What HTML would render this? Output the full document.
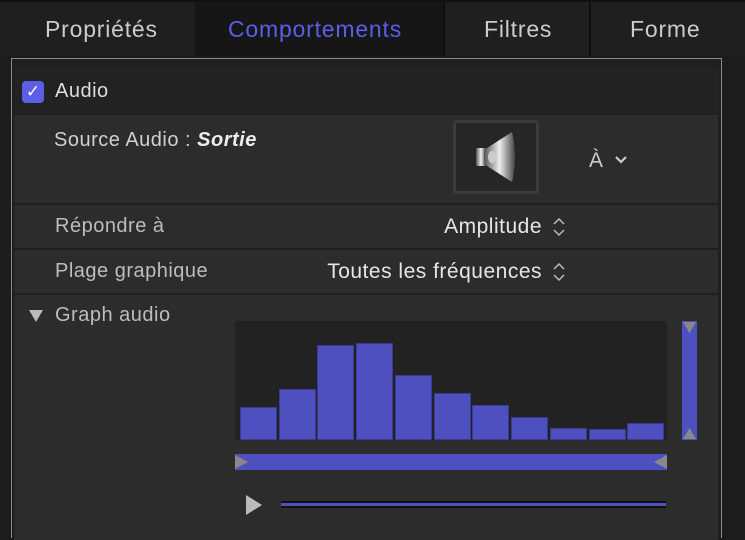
<!DOCTYPE html><html><head><style>
body{margin:0;width:745px;height:535px;background:#1c1c1c;font-family:"Liberation Sans",sans-serif;position:relative;overflow:hidden;color:#ddd}
div,span{position:absolute;white-space:nowrap}
.t{font-size:23px;letter-spacing:.8px;top:16px}
.lbl{font-size:20px;letter-spacing:.5px;color:#bdbdbd}
.v{font-size:21px;letter-spacing:.5px;color:#e6e6e6;right:203px}
.bar{background:#4f50c0;border:1px solid #3a3b90;box-sizing:border-box}
</style></head><body>
<div style="left:0;top:0;width:745px;height:56px;background:#1f1f1f;border-top:2px solid #111;box-sizing:border-box"></div>
<div style="left:195px;top:2px;width:248px;height:54px;background:#161616"></div>
<div style="left:443px;top:2px;width:2px;height:54px;background:#0e0e0e"></div>
<div style="left:589px;top:2px;width:2px;height:54px;background:#0e0e0e"></div>
<span class="t" style="left:45px;color:#ccc">Propriétés</span>
<span class="t" style="left:228px;color:#5d5ee8">Comportements</span>
<span class="t" style="left:484px;color:#ccc">Filtres</span>
<span class="t" style="left:630px;color:#ccc">Forme</span>
<div style="left:11px;top:58px;width:711px;height:480px;border:1px solid #8a8a8a;border-bottom:none;background:#1f1f1f;box-sizing:border-box"></div>
<div style="left:13px;top:66px;width:706px;height:48px;background:#222"></div>
<div style="left:22px;top:81px;width:22px;height:22px;border-radius:4px;background:#5d5ee8;color:#fff;font-size:17px;text-align:center;line-height:22px">✓</div>
<span style="left:55px;top:80px;font-size:20px;letter-spacing:.5px;color:#ddd">Audio</span>
<div style="left:14px;top:115px;width:704px;height:88px;background:#2c2c2c"></div>
<div style="left:14px;top:205px;width:704px;height:43px;background:#2c2c2c"></div>
<div style="left:14px;top:250px;width:704px;height:43px;background:#2c2c2c"></div>
<div style="left:14px;top:295px;width:704px;height:245px;background:#2c2c2c"></div>
<span class="lbl" style="left:54px;top:129px;color:#d0d0d0">Source Audio : <b><i style="color:#eee">Sortie</i></b></span>
<div style="left:453px;top:120px;width:86px;height:74px;border:3px solid #3c3c3c;border-radius:4px;background:#262626;box-sizing:border-box"></div>
<svg style="position:absolute;left:472px;top:130px" width="50" height="56"><defs><linearGradient id="g" x1="0" x2="1"><stop offset="0" stop-color="#555"/><stop offset=".5" stop-color="#eee"/><stop offset="1" stop-color="#444"/></linearGradient></defs><rect x="4" y="18" width="10" height="18" rx="2" fill="url(#g)"/><path d="M12 20 L40 2 Q46 27 40 52 L12 34Z" fill="url(#g)"/><ellipse cx="20" cy="27" rx="4" ry="6" fill="#ccc"/></svg>
<span style="left:589px;top:149px;font-size:21px;color:#ccc">À</span>
<svg style="position:absolute;left:614px;top:155px" width="14" height="10"><path d="M2 2 L7 7 L12 2" stroke="#ccc" stroke-width="2.2" fill="none"/></svg>
<span class="lbl" style="left:55px;top:215px">Répondre à</span>
<span class="v" style="top:215px">Amplitude</span>
<span class="lbl" style="left:55px;top:260px">Plage graphique</span>
<span class="v" style="top:260px">Toutes les fréquences</span>
<svg style="position:absolute;left:552px;top:216px" width="14" height="22"><path d="M2 8 L7 3 L12 8 M2 14 L7 19 L12 14" stroke="#bbb" stroke-width="1.5" fill="none"/></svg>
<svg style="position:absolute;left:552px;top:261px" width="14" height="22"><path d="M2 8 L7 3 L12 8 M2 14 L7 19 L12 14" stroke="#bbb" stroke-width="1.5" fill="none"/></svg>
<svg style="position:absolute;left:28px;top:309px" width="16" height="14"><path d="M1 1 H15 L8 13Z" fill="#bbb"/></svg>
<span class="lbl" style="left:55px;top:304px">Graph audio</span>
<div style="left:235px;top:321px;width:432px;height:119px;background:#222;border-radius:3px"></div>
<div class="bar" style="left:240px;top:407px;width:37px;height:33px"></div>
<div class="bar" style="left:279px;top:389px;width:37px;height:51px"></div>
<div class="bar" style="left:317px;top:345px;width:37px;height:95px"></div>
<div class="bar" style="left:356px;top:343px;width:37px;height:97px"></div>
<div class="bar" style="left:395px;top:375px;width:37px;height:65px"></div>
<div class="bar" style="left:434px;top:393px;width:37px;height:47px"></div>
<div class="bar" style="left:472px;top:405px;width:37px;height:35px"></div>
<div class="bar" style="left:511px;top:417px;width:37px;height:23px"></div>
<div class="bar" style="left:550px;top:428px;width:37px;height:12px"></div>
<div class="bar" style="left:589px;top:429px;width:37px;height:11px"></div>
<div class="bar" style="left:627px;top:423px;width:37px;height:17px"></div>
<svg style="position:absolute;left:682px;top:321px" width="15" height="119"><rect width="15" height="119" fill="#4f50c0"/><path d="M1 1 H14 L7.5 12Z M1 118 H14 L7.5 107Z" fill="#888"/></svg>
<svg style="position:absolute;left:235px;top:454px" width="432" height="16"><rect width="432" height="16" fill="#4f50c0"/><path d="M0 1 L13 8 L0 15Z M432 1 L419 8 L432 15Z" fill="#888"/></svg>
<svg style="position:absolute;left:245px;top:494px" width="18" height="22"><path d="M1 1 L17 11 L1 21Z" fill="#bbb"/></svg>
<div style="left:281px;top:501px;width:385px;height:7px;background:#111"></div>
<div style="left:281px;top:503px;width:385px;height:3px;background:#4f50c0"></div>
</body></html>
